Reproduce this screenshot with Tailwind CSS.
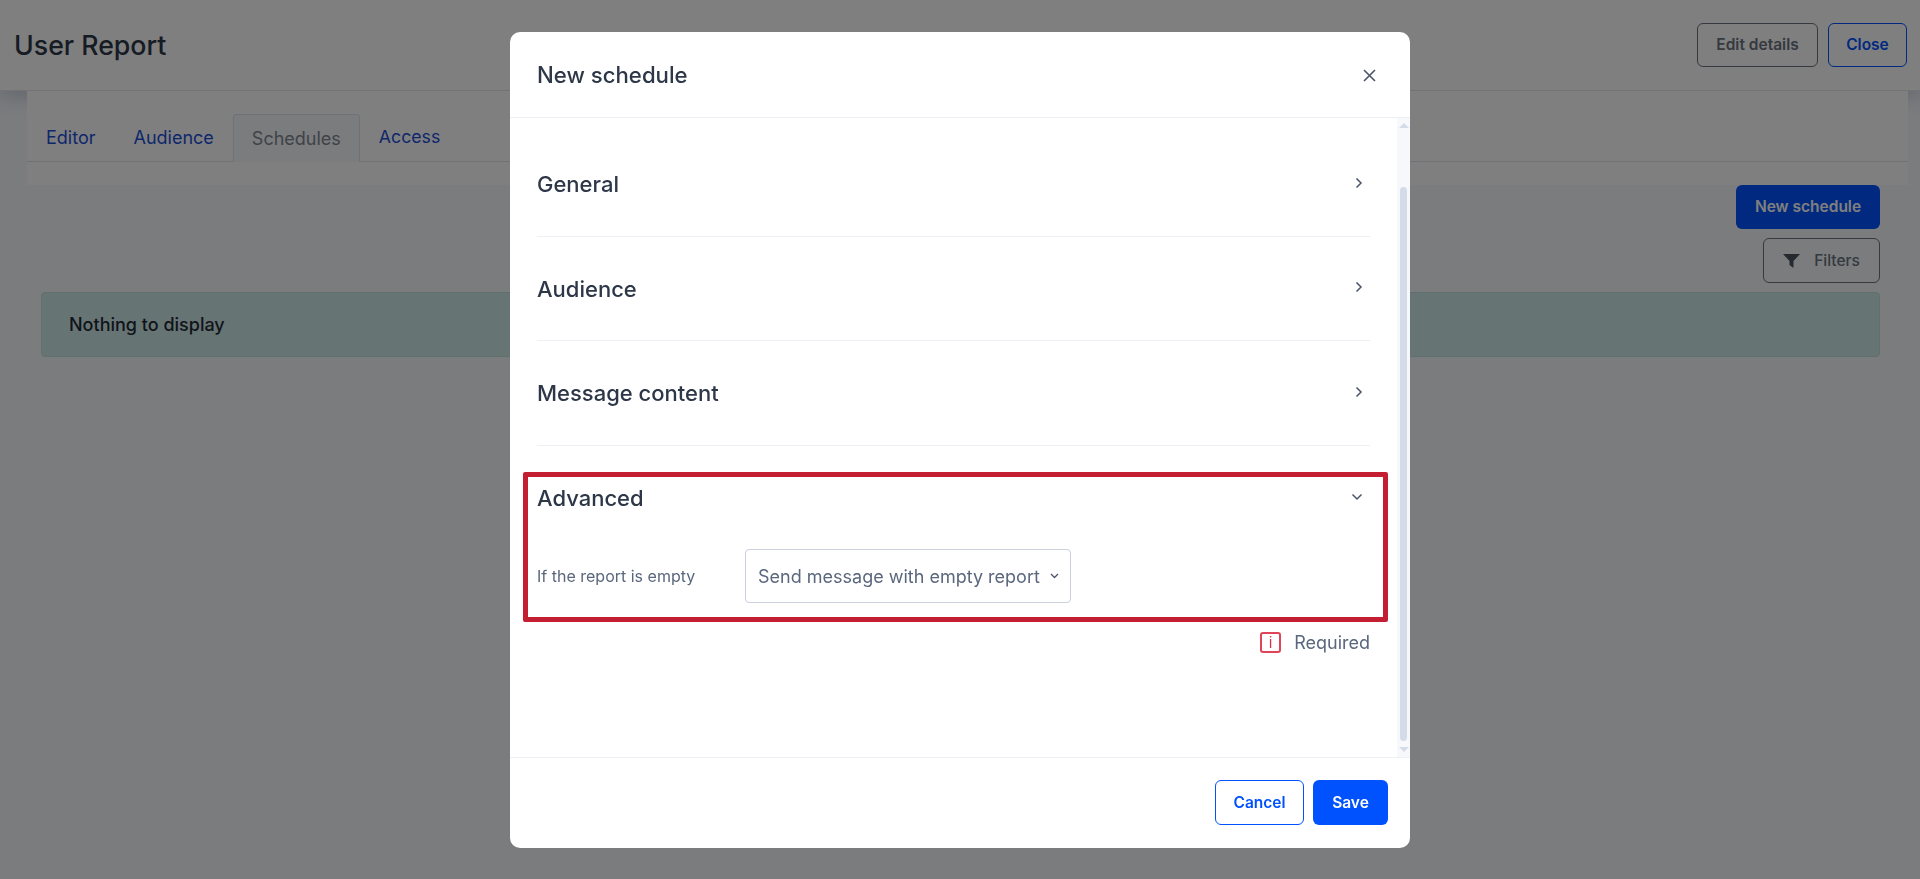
<!DOCTYPE html>
<html lang="en">
<head>
    <meta charset="UTF-8">
    <meta name="viewport" content="width=device-width, initial-scale=1.0">
    <title>User Report</title>
    <script src="https://cdn.jsdelivr.net/npm/@tailwindcss/browser@4"></script>
</head>
<body class="h-[879px] overflow-hidden bg-[#f6f8fc] font-['Inter',sans-serif] text-[#1f2937]">

    <!-- Page behind the dialog -->
    <header class="flex h-[91px] items-center justify-between border-b border-[#e5e7eb] bg-white pl-[14px] pr-[13px] shadow-[0_6px_18px_rgba(30,60,110,0.22)]">
        <h1 class="text-[26.700px] font-medium leading-none text-[#2d3748]">User Report</h1>
        <div class="flex gap-[10px]">
            <button class="h-[44px] w-[121px] rounded-md border border-[#6b7280] text-[15.500px] font-semibold text-[#6b7280]">Edit details</button>
            <button class="h-[44px] w-[79px] rounded-md border border-[#0052ff] text-[15.500px] font-semibold text-[#0052ff]">Close</button>
        </div>
    </header>

    <div class="mx-[27px] h-[94px] w-[1881px] bg-white pt-[23px]">
        <nav class="flex h-[48px] border-b border-[#dfe3ea] text-[18px]">
            <a class="flex items-center pl-[19px] pr-[19px] text-[#1d4ed8]">Editor</a>
            <a class="flex items-center pl-[19px] pr-[19px] text-[#1d4ed8]">Audience</a>
            <a class="flex h-[48px] items-center rounded-t border border-b-0 border-[#dfe3ea] bg-[#f6f8fc] px-[18px] text-[#7f8690]">Schedules</a>
            <a class="flex items-center px-[19px] text-[17.700px] text-[#1d4ed8]">Access</a>
        </nav>
    </div>

    <main class="pl-[41px] pr-[40px]">
        <div class="flex flex-col items-end">
            <button class="h-[44px] w-[144px] rounded-md bg-[#0052ff] text-[15.500px] font-semibold text-white">New schedule</button>
            <button class="mt-[9px] flex h-[45px] w-[117px] items-center justify-center gap-[14px] rounded-md border border-[#6b7280] text-[15.500px] font-medium text-[#6b7280]">
                <svg class="h-[14px] w-[17px]" viewBox="0 0 17 14" fill="#4b5563"><path d="M0 0h17L10.500 7v7L6.500 11V7z"/></svg>
                Filters
            </button>
        </div>
        <div class="mt-[9px] flex h-[65px] items-center rounded border border-[#c2e0dd] bg-[#cfe8e8] px-[27px] text-[18px] font-medium text-[#1f2937]">Nothing to display</div>
    </main>

    <!-- Dialog -->
    <div class="fixed inset-0 bg-black/50"></div>
    <div class="fixed inset-0 flex items-start justify-center pt-[32px]">
        <div class="flex h-[816px] w-[900px] flex-col overflow-hidden rounded-[10px] bg-white">
            <div class="flex h-[86px] shrink-0 items-center justify-between border-b border-[#edf0f5] pl-[27px] pr-[34px] pt-[1px]">
                <h2 class="text-[22.200px] font-medium text-[#2d3748]">New schedule</h2>
                <svg class="h-[13px] w-[13px]" viewBox="0 0 13 13" fill="none" stroke="#4a5568" stroke-width="1.600"><path d="M1 1l11 11M12 1L1 12"/></svg>
            </div>

            <div class="flex min-h-0 flex-1">
                <div class="min-w-0 flex-1 pl-[27px] pr-[27px]">
                    <div class="flex h-[119px] items-center justify-between border-b border-[#edf0f5] pr-[7px] pt-[14px]">
                        <h3 class="text-[22px] font-medium text-[#2d3748]">General</h3>
                        <svg class="mb-[3px] h-[12px] w-[8px]" viewBox="0 0 8 12" fill="none" stroke="#4a5568" stroke-width="1.500"><path d="M1.500 1.500L6 6l-4.500 4.500"/></svg>
                    </div>
                    <div class="flex h-[104px] items-center justify-between border-b border-[#edf0f5] pr-[7px] pt-[1px]">
                        <h3 class="text-[22px] font-medium text-[#2d3748]">Audience</h3>
                        <svg class="mb-[5px] h-[12px] w-[8px]" viewBox="0 0 8 12" fill="none" stroke="#4a5568" stroke-width="1.500"><path d="M1.500 1.500L6 6l-4.500 4.500"/></svg>
                    </div>
                    <div class="flex h-[105px] items-center justify-between border-b border-[#edf0f5] pr-[7px] pt-[1px]">
                        <h3 class="text-[22px] font-medium text-[#2d3748]">Message content</h3>
                        <svg class="mb-[4px] h-[12px] w-[8px]" viewBox="0 0 8 12" fill="none" stroke="#4a5568" stroke-width="1.500"><path d="M1.500 1.500L6 6l-4.500 4.500"/></svg>
                    </div>
                    <div class="relative pt-[26px]">
                        <div class="flex h-[52px] items-center justify-between pr-[7px] pt-[1px]">
                            <h3 class="text-[22px] font-medium text-[#2d3748]">Advanced</h3>
                            <svg class="mb-[4px] h-[8px] w-[12px]" viewBox="0 0 12 8" fill="none" stroke="#4a5568" stroke-width="1.500"><path d="M1.500 1.500L6 6l4.500-4.500"/></svg>
                        </div>
                        <div class="mt-[25px] flex items-center">
                            <label class="w-[208px] text-[16px] text-[#5a677d]">If the report is empty</label>
                            <div class="flex h-[54px] w-[326px] items-center justify-between rounded border border-[#cbd2de] pl-[12px] pr-[11px] text-[18px] text-[#5a677d]">
                                Send message with empty report
                                <svg class="h-[6px] w-[9px]" viewBox="0 0 9 6" fill="none" stroke="#4a5568" stroke-width="1.300"><path d="M1 1l3.500 3.500L8 1"/></svg>
                            </div>
                        </div>
                        <div class="absolute left-[-14px] right-[-18px] top-[26px] h-[150px] rounded-[2px] border-[5px] border-[#c41e33]"></div>
                    </div>
                    <div class="mt-[26px] flex items-center justify-end gap-[13px] text-[18px] text-[#5a677d]">
                        <span class="flex h-[21px] w-[21px] items-center justify-center rounded-[3px] border-2 border-[#e04458] text-[15px] leading-none text-[#d6334a]">i</span>
                        Required
                    </div>
                </div>
                <div class="flex w-[13px] shrink-0 flex-col bg-[#f6f8fb]">
                    <div class="mx-auto mt-[5px] h-0 w-0 border-x-[5px] border-b-[5px] border-x-transparent border-b-[#d5dce9]"></div>
                    <div class="mx-auto mt-[59px] h-[554px] w-[7px] rounded bg-[#d5dce9]"></div>
                    <div class="mx-auto mt-[6px] h-0 w-0 border-x-[5px] border-t-[5px] border-x-transparent border-t-[#d5dce9]"></div>
                </div>
            </div>

            <div class="flex h-[91px] shrink-0 items-center justify-end gap-[9px] border-t border-[#edf0f5] pb-[1px] pr-[22px]">
                <button class="h-[45px] w-[89px] rounded-md border border-[#0052ff] text-[15.500px] font-semibold text-[#0052ff]">Cancel</button>
                <button class="h-[45px] w-[75px] rounded-md bg-[#0052ff] text-[15.500px] font-semibold text-white">Save</button>
            </div>
        </div>
    </div>
</body>
</html>
